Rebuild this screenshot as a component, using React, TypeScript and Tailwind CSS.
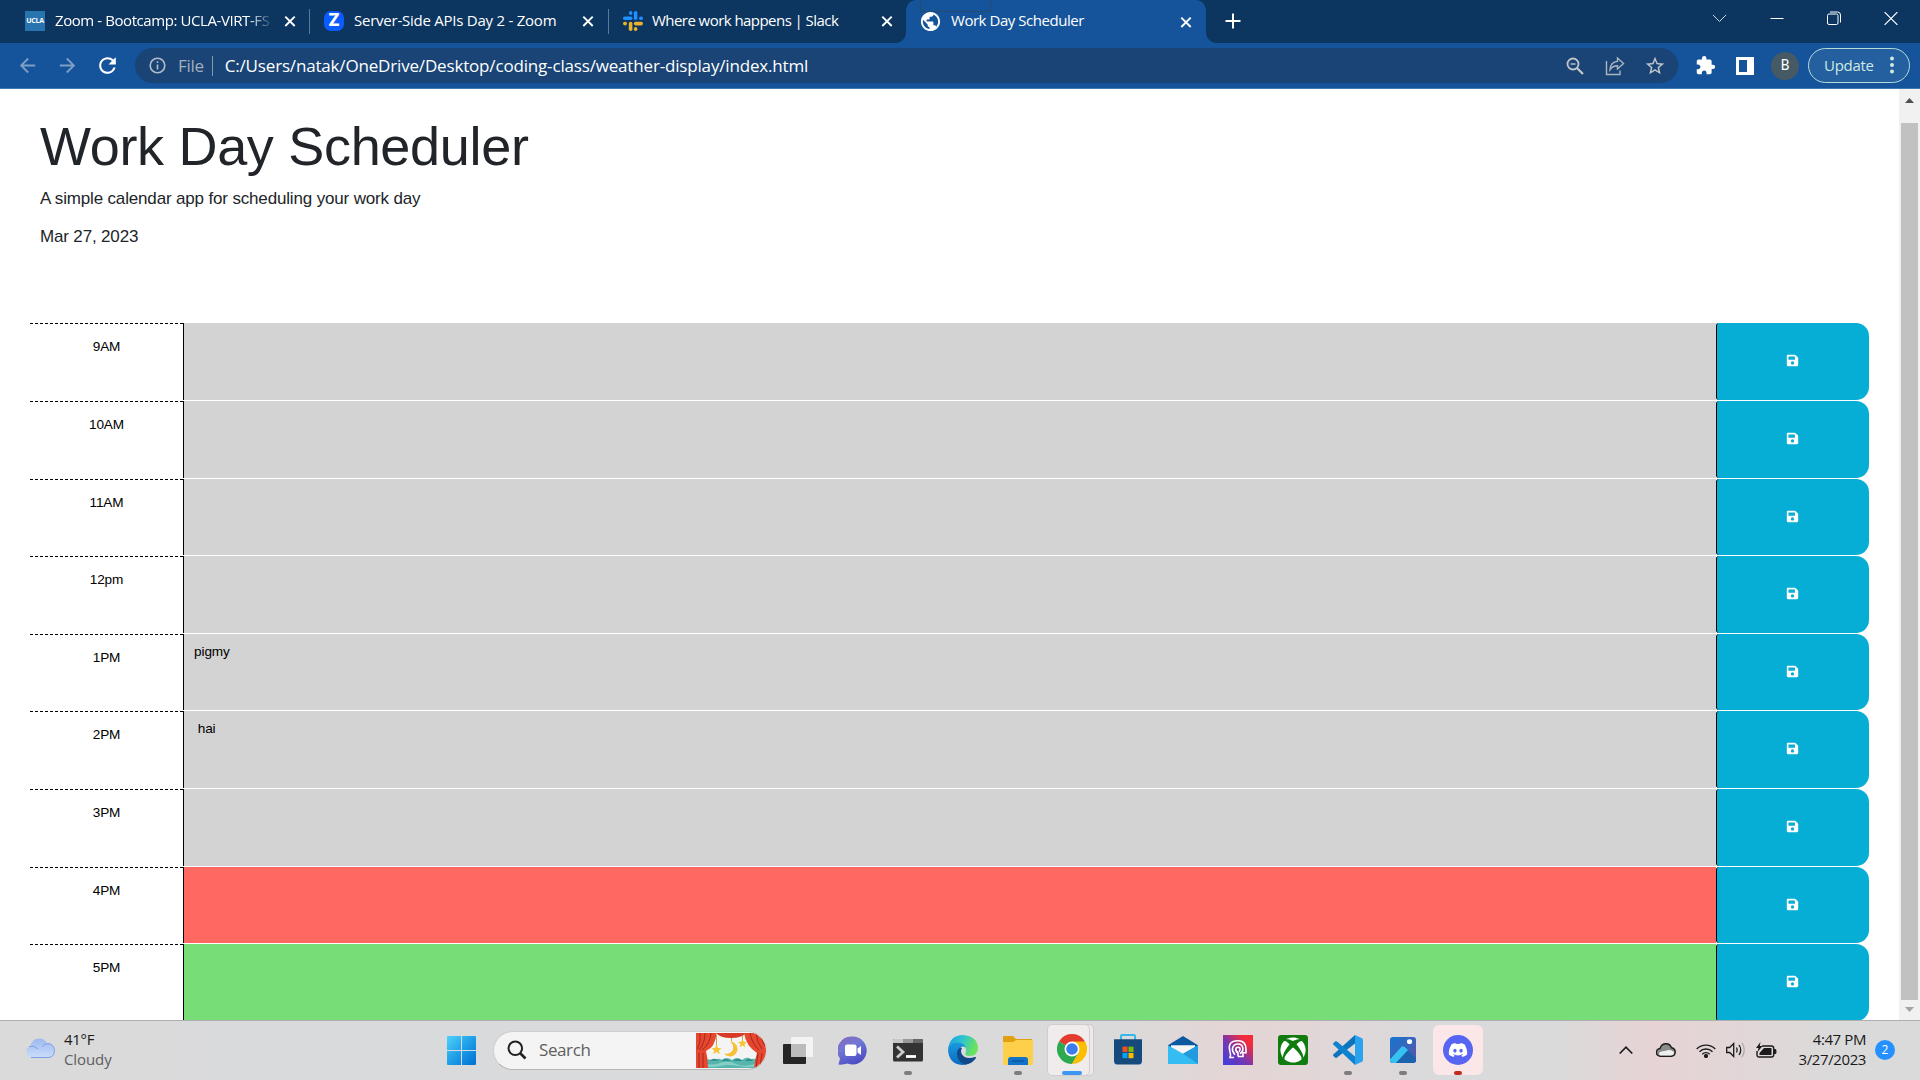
import React from 'react';
import { FaSave } from 'react-icons/fa';
import { MdExtension, MdStarBorder, MdRefresh, MdArrowBack, MdArrowForward, MdPublic } from 'react-icons/md';
import { FaDiscord, FaXbox } from 'react-icons/fa';

const UI = "font-['Open_Sans','Noto_Sans',sans-serif]";

function TabClose() {
  return (
    <svg className="size-[18px] shrink-0" viewBox="0 0 18 18" fill="none" stroke="#fff" strokeWidth="1.9">
      <path d="M4.3 4.6l9.4 9.4M13.7 4.6L4.3 14" />
    </svg>
  );
}

function SlackIcon() {
  return (
    <svg className="size-5 shrink-0" viewBox="0 0 20 20">
      <g fill="#1e90ff">
        <rect x="6" y="0" width="3.4" height="4" rx="1.7" />
        <rect x="0" y="5.5" width="9.4" height="3.6" rx="1.8" />
        <rect x="10.8" y="0" width="3.6" height="9.1" rx="1.8" />
        <rect x="16" y="5.5" width="4" height="3.6" rx="1.8" />
      </g>
      <g fill="#ecb22e">
        <rect x="0" y="10.8" width="4" height="3.6" rx="1.8" />
        <rect x="5.8" y="10.8" width="3.6" height="9.2" rx="1.8" />
        <rect x="10.8" y="10.8" width="9.2" height="3.6" rx="1.8" />
        <rect x="10.8" y="16" width="3.6" height="4" rx="1.8" />
      </g>
    </svg>
  );
}

function TabStrip() {
  return (
    <div className="flex h-[43px] bg-[#0c3560] text-white">
      <div className="flex h-[42px] w-[310px] items-center pl-[25px]">
        <div className="flex size-5 shrink-0 items-center justify-center bg-[#2774ae] text-[7px] font-bold tracking-[-0.3px]">UCLA</div>
        <div className="ml-[10px] w-[220px] whitespace-nowrap pb-[2px] text-[15px] tracking-[-0.42px] [mask-image:linear-gradient(to_right,#000_88%,transparent)]">
          Zoom - Bootcamp: UCLA-VIRT-FS
        </div>
        <div className="ml-[7px]"><TabClose /></div>
        <div className="ml-[10px] h-[25px] w-px bg-[#5b7896]" />
      </div>
      <div className="flex h-[42px] w-[299px] items-center pl-[14px]">
        <div className="flex size-5 shrink-0 items-center justify-center rounded-[7px] bg-[#0b5cff] font-[Inter] text-[17px] font-extrabold">Z</div>
        <div className="ml-[10px] w-[225px] whitespace-nowrap pb-[2px] text-[15px] tracking-[-0.24px]">Server-Side APIs Day 2 - Zoom</div>
        <TabClose />
        <div className="ml-[11px] h-[25px] w-px bg-[#5b7896]" />
      </div>
      <div className="flex h-[42px] w-[291px] items-center pl-[14px]">
        <SlackIcon />
        <div className="ml-[9px] w-[226px] whitespace-nowrap pb-[2px] text-[15px] tracking-[-0.55px]">Where work happens | Slack</div>
        <TabClose />
      </div>
      <div className="relative -ml-[4px] flex h-[43px] w-[320px] items-end">
        <div className="size-[10px] shrink-0 bg-[radial-gradient(circle_at_0_0,transparent_9.5px,#15539a_10px)]" />
        <div className="flex h-[43px] w-[300px] shrink-0 items-center rounded-t-[10px] bg-[#15539a] pl-[13px]">
          <MdPublic className="size-[23px] shrink-0" />
          <div className="ml-[9px] w-[225px] whitespace-nowrap pb-[3px] text-[15px] tracking-[-0.46px]">Work Day Scheduler</div>
          <div className="ml-px"><TabClose /></div>
        </div>
        <div className="size-[10px] shrink-0 bg-[radial-gradient(circle_at_100%_0,transparent_9.5px,#15539a_10px)]" />
        <div className="absolute left-[24px] top-[-2px] h-[14px] w-[71px] border border-[#264a70]" />
      </div>
      <svg className="ml-[8px] mt-[12px] size-[18px]" viewBox="0 0 18 18" stroke="#fff" strokeWidth="2">
        <path d="M9 1.5v15M1.500 9h15" />
      </svg>
      <div className="ml-auto flex items-start gap-[43px] pr-[22px] pt-[11px]">
        <svg className="h-[15px] w-[15px]" viewBox="0 0 15 15" fill="none" stroke="#c9d5e1"><path d="M1 4l6.500 6.500L14 4" /></svg>
        <svg className="h-[15px] w-[14px]" viewBox="0 0 14 15" stroke="#fff"><path d="M0.500 7.500h13" /></svg>
        <svg className="h-[15px] w-[14px]" viewBox="0 0 14 15" fill="none" stroke="#fff"><rect x="0.500" y="3" width="10.500" height="10.500" rx="1.500" /><path d="M3 1h7.500q3 0 3 3v7.500" /></svg>
        <svg className="h-[15px] w-[14px]" viewBox="0 0 14 15" stroke="#fff" strokeWidth="1.200"><path d="M.6 1.100l12.800 12.800M13.400 1.100L.6 13.900" /></svg>
      </div>
    </div>
  );
}

function Toolbar() {
  return (
    <div className="flex h-[46px] items-center border-b border-[#3f78b4] bg-[#15539a] pr-[10px]">
      <MdArrowBack className="ml-[16px] size-[23px] text-[#7d9fc6]" />
      <MdArrowForward className="ml-[17px] size-[23px] text-[#7d9fc6]" />
      <MdRefresh className="ml-[16px] size-[25px] text-white" />
      <div className="ml-[15px] flex h-[35px] w-[1543px] items-center rounded-full bg-[#194475]">
        <svg className="ml-[14px] size-[17px]" viewBox="0 0 17 17" fill="none" stroke="#b3bcc8" strokeWidth="1.600">
          <circle cx="8.500" cy="8.500" r="7.300" /><path d="M8.500 7.500v5M8.500 4.200v1.700" />
        </svg>
        <div className="ml-[12px] text-[17px] leading-none tracking-[-0.3px] text-[#a3afbd]">File</div>
        <div className="ml-[8px] h-[20px] w-px bg-[#8397ae]" />
        <div className="ml-[12px] flex-1 whitespace-nowrap text-[17px] leading-[24px] tracking-[-0.17px] text-white">
          C:/Users/natak/OneDrive/Desktop/coding-class/weather-display/index.html
        </div>
        <svg className="mr-[21px] size-[18px]" viewBox="0 0 18 18" fill="none" stroke="#c3c7cd" strokeWidth="1.800">
          <circle cx="7" cy="7" r="5.500" /><path d="M11 11l6 6" strokeWidth="2.200" /><path d="M4.500 7h5" strokeWidth="1.400" />
        </svg>
        <svg className="mr-[19px] size-[20px]" viewBox="0 0 20 20" fill="none" stroke="#aab5c2" strokeWidth="1.400">
          <path d="M1.500 5v13.500h13.500v-4" /><path d="M12.500 2l6 5.500-6 5.500v-3.200c-3.500 0-5.500 1-7.500 4 .3-4.500 2.500-8 7.500-8.600z" />
        </svg>
        <MdStarBorder className="mr-[12px] size-[22px] text-[#c3c7cd]" />
      </div>
      <MdExtension className="ml-[17px] size-[21px] text-white" />
      <div className="ml-[20px] h-[18px] w-[18px] border-[3px] border-r-[7px] border-white" />
      <div className="ml-[17px] flex size-[28px] items-center justify-center rounded-full bg-[#455a64] font-[Roboto] text-[14px] text-white">B</div>
      <div className="ml-[9px] flex h-[35px] w-[102px] items-center rounded-full border-[1.500px] border-[#b5dcd6] bg-[#245f9f] pb-px pl-[15px] text-[15px] text-[#cfe9e2]">
        <span className="w-[62px] tracking-[-0.3px]">Update</span>
        <svg className="h-[18px] w-[12px]" viewBox="0 0 12 18" fill="#cfe9e2"><circle cx="6" cy="2.500" r="2" /><circle cx="6" cy="9" r="2" /><circle cx="6" cy="15.500" r="2" /></svg>
      </div>
    </div>
  );
}

const rows = [
  { label: '9AM', size: 'h-[78px]', color: 'bg-[#d3d3d3]', text: '' },
  { label: '10AM', size: 'h-[78px]', color: 'bg-[#d3d3d3]', text: '' },
  { label: '11AM', size: 'h-[77px]', color: 'bg-[#d3d3d3]', text: '' },
  { label: '12pm', size: 'h-[78px]', color: 'bg-[#d3d3d3]', text: '' },
  { label: '1PM', size: 'h-[77px]', color: 'bg-[#d3d3d3]', text: 'pigmy' },
  { label: '2PM', size: 'h-[78px]', color: 'bg-[#d3d3d3]', text: ' hai' },
  { label: '3PM', size: 'h-[78px]', color: 'bg-[#d3d3d3]', text: '' },
  { label: '4PM', size: 'h-[77px]', color: 'bg-[#ff6961]', text: '' },
  { label: '5PM', size: 'h-[78px]', color: 'bg-[#77dd77]', text: '' },
];

function Page() {
  return (
    <div className="flex h-[931px] overflow-hidden bg-white font-['Liberation_Sans',Arial,sans-serif]">
      <div className="min-w-0 flex-1">
        <header className="h-[234px] pl-[40px] pt-[25px] text-[#212529]">
          <h1 className="whitespace-nowrap text-[54px] leading-[65px] tracking-[-0.31px]">Work Day Scheduler</h1>
          <p className="mt-[8px] text-[17px] leading-[24px] tracking-[-0.16px]">A simple calendar app for scheduling your work day</p>
          <p className="mt-[14px] text-[17px] leading-[24px] tracking-[-0.16px]">Mar 27, 2023</p>
        </header>
        <main className="ml-[30px] w-[1839px]">
          {rows.map((r) => (
            <div key={r.label} className={'flex pb-px ' + r.size}>
              <div className="w-[153px] shrink-0">
                <svg className="block h-px w-[153px]" viewBox="0 0 153 1"><path d="M0 .5h153" stroke="#000" strokeDasharray="3 2" /></svg>
                <div className="pt-[14px] text-center text-[13.6px] leading-[17px] tracking-[-0.15px] text-black">{r.label}</div>
              </div>
              <div className={'flex-1 whitespace-pre border-l border-black pl-[10px] pt-[9px] text-[13.6px] leading-[17px] tracking-[-0.1px] text-black ' + r.color}>{r.text}</div>
              <div className="w-[153px] shrink-0">
                <div className="flex h-full items-center justify-center rounded-l-[3px] rounded-r-[13px] border-l border-black bg-[#06aed5] pb-[2px] pr-[2px]">
                  <FaSave className="size-[13px] text-white" />
                </div>
              </div>
            </div>
          ))}
        </main>
      </div>
      <div className="flex w-[21px] flex-col items-center bg-[#f1f1f1]">
        <svg className="mt-[9px] h-[5px] w-[9px]" viewBox="0 0 9 5"><path d="M0 5L4.500 0 9 5z" fill="#505050" /></svg>
        <div className="mt-[20px] h-[877px] w-[17px] bg-[#c1c1c1]" />
        <svg className="mt-[7px] h-[5px] w-[9px]" viewBox="0 0 9 5"><path d="M0 0L4.500 5 9 0z" fill="#a3a3a3" /></svg>
      </div>
    </div>
  );
}

function Slot({ children, mark }: { children: React.ReactNode; mark?: string }) {
  return (
    <div className="relative flex h-[58px] w-[55px] shrink-0 items-center justify-center">
      {children}
      {mark && <div className={'absolute bottom-[5px] h-[4px] rounded-full ' + mark} />}
    </div>
  );
}

function SearchArt() {
  return (
    <svg className="h-[35px] w-[70px] shrink-0" viewBox="0 0 70 35">
      <rect width="70" height="35" fill="#f4f4f4" />
      <path d="M8 29q4-5 9-1 5-4 9-1 4-4 10 0 5-4 10 0 5-4 9-1 4-1 7 1v8H8z" fill="#56b5ad" />
      <path d="M8 30q8 3 16 0t16 1 22-1v3q-10 2-20 0t-18 0-16 0z" fill="#85cfc6" />
      <path d="M14 28q3-4 9-.5zM25 28q4-4 10 0zM37 28q4-4 10 0zM49 28q4-4 8 0z" fill="#2c8b8d" />
      <path d="M20.500 2v11M46.500 2v5M35.500 3v5" stroke="#caa04a" />
      <path d="M34 8.500a7.500 7.500 0 1 1-6 12q7 1 9-4 1-5-3-8z" fill="#f5c136" />
      <path d="M20.500 12l1.500 3 3.500.3-2.700 2.200 1 3.500-3.300-2-3.300 2 1-3.500-2.700-2.200 3.500-.3zM46.500 6l1.300 2.800 3.200.3-2.500 2 .8 3.200-2.800-1.700-2.800 1.700.8-3.200-2.500-2 3.200-.3z" fill="#f7c531" />
      <path d="M20 0h30q-4 5-15 5T20 0z" fill="#d93a28" />
      <path d="M0 0h20.500q-1 14-10.500 18 2 8 2 17H0z" fill="#e5472f" />
      <path d="M48 0h22v35H58q1-9 3-15-11-7-13-20z" fill="#e5472f" />
      <path d="M4 0q1 10-3 16M9 0q0 10-6 17M15 0q-1 11-9 17M3 20v15M7 20v15M54 0q2 11 9 17M60 0q1 10 6 16M66 20l-2 15M62 20l-2 15M65 0q0 8 4 13" stroke="#a8261f" fill="none" />
    </svg>
  );
}

function Taskbar() {
  return (
    <div className="flex h-[60px] items-center border-t border-[#b0afb0] bg-[linear-gradient(90deg,#dadada_0%,#d9dadc_18%,#dadada_58%,#e4d5d6_64%,#e2d6d7_68%,#d9dadc_75%,#dadada_81%,#e6d3d5_86%,#e2d6d7_90%,#dadada_96%)]">
      <svg className="mb-[6px] ml-[25px] h-[20px] w-[30px]" viewBox="0 0 30 20">
        <defs><linearGradient id="cl" x2="0" y2="1"><stop stopColor="#9db9ee" /><stop offset="1" stopColor="#c9dcfa" /></linearGradient></defs>
        <path d="M6 19.500a6 6 0 0 1-.5-11.500Q7 .5 14 .5q6 0 8 5 7.500 0 7.500 7t-6.500 7z" fill="url(#cl)" />
        <path d="M4 8.500q5-1.500 9 2.500M17 9q2-3.500 6-3.500 6 .5 6.500 7-.5 7-6.500 7H6" fill="none" stroke="#7c9fe6" />
      </svg>
      <div className="ml-[9px] w-[372px] pb-[4px] text-[15px] leading-[20px] tracking-[-0.3px]">
        <div className="text-[#1b1b1b]">41°F</div>
        <div className="tracking-[-0.1px] text-[#5f5f5f]">Cloudy</div>
      </div>
      <svg className="ml-[11px] size-[29px]" viewBox="0 0 29 29">
        <defs><linearGradient id="wn" x2="1" y2="1"><stop stopColor="#4fd3fb" /><stop offset=".5" stopColor="#1f9ee8" /><stop offset="1" stopColor="#0070d2" /></linearGradient></defs>
        <path d="M0 1q0-1 1-1h13v14H0zM15 0h13q1 0 1 1v13H15zM0 15h14v14H1q-1 0-1-1zM15 15h14v13q0 1-1 1H15z" fill="url(#wn)" />
      </svg>
      <div className="mb-px ml-[17px] flex h-[39px] w-[274px] items-center overflow-hidden rounded-full border border-b-[#b5b5b5] border-[#cfcfcf] bg-[#f4f4f4]">
        <svg className="ml-[13px] size-[20px]" viewBox="0 0 20 20" fill="none" stroke="#222" strokeWidth="2"><circle cx="8.300" cy="8.300" r="6.800" /><path d="M13 13l5.500 5.500" strokeWidth="2.600" /></svg>
        <div className="ml-[12px] flex-1 text-[17px] tracking-[-0.4px] text-[#5f5f5f]">Search</div>
        <SearchArt />
      </div>
      <div className="ml-[3px] flex">
        <Slot>
          <svg className="size-[30px]" viewBox="0 0 30 30"><rect x="0" y="8" width="23" height="20" rx="1" fill="#252525" /><rect x="8" y="1" width="22" height="20" rx="1" fill="#f3f3f3" /><path d="M8 8h15v13H8z" fill="#bcbcbc" /></svg>
        </Slot>
        <Slot>
          <svg className="size-[29px]" viewBox="0 0 29 29">
            <defs><linearGradient id="tm" x1=".1" y1="0" x2=".6" y2="1"><stop stopColor="#8c65b4" /><stop offset=".4" stopColor="#7178d6" /><stop offset="1" stopColor="#4b4bc4" /></linearGradient></defs>
            <path d="M14.500.5a14 14 0 1 1-5 27q-5 1.500-9 1l1.500-6A14 14 0 0 1 14.500.5z" fill="url(#tm)" /><rect x="7" y="8.500" width="11.500" height="11.500" rx="2" fill="#fff" /><path d="M19.500 12.500l3.500-2.500v9l-3.500-2.500z" fill="#fff" />
          </svg>
        </Slot>
        <Slot mark="w-[8px] bg-[#7d7d7d]">
          <svg className="h-[23px] w-[30px]" viewBox="0 0 30 23"><rect width="30" height="22.500" rx="1.500" fill="#333" /><path d="M1 0h9v4H0V1z" fill="#c9c9c9" /><path d="M10 0h10v4H10z" fill="#999" /><path d="M20 0h9l1 1v3H20z" fill="#666" /><path d="M4 7.500l6 5.500-6 5.500" stroke="#ccc" strokeWidth="2.800" fill="none" /><path d="M13 17.500h10" stroke="#fff" strokeWidth="2.800" /></svg>
        </Slot>
        <Slot>
          <svg className="mb-px h-[30px] w-[30px]" viewBox="0 0 30 30">
            <defs>
              <linearGradient id="ed" x2="1" y2=".3"><stop stopColor="#1a9be0" /><stop offset=".5" stopColor="#2fc3d0" /><stop offset="1" stopColor="#6be35c" /></linearGradient>
              <linearGradient id="ee" x2="0" y2="1"><stop stopColor="#1a9ae0" /><stop offset="1" stopColor="#0c6ac0" /></linearGradient>
            </defs>
            <path d="M0 14Q2 0 15 0q14 1 15 12.500 0 8.500-8.500 8.500-5 0-4-2.500Q19.500 14 16 11 9 6 0 14z" fill="url(#ed)" />
            <path d="M0 15Q1 7.500 9 7.500q6.500 0 9 5-5-2.500-6.500 2-1.500 7 3.500 10.500 3.500 2.500 8 1.500-3 3.500-9 3.500Q1 29 0 15z" fill="url(#ee)" />
            <path d="M12 12.500q-4.500 4-2.500 9.500 2 6 8 7.500 7-1 10.500-6.500.5-1.500-1-1-9 3-13-2.500-2-3.500 0-6.500z" fill="#114a8b" />
          </svg>
        </Slot>
        <Slot mark="w-[8px] bg-[#7d7d7d]">
          <svg className="h-[29px] w-[30px]" viewBox="0 0 30 29"><path d="M0 1q0-1 1-1h9l3 3h16v8H0z" fill="#e0a010" /><path d="M0 6h10l3-2h17v24q0 1-1 1H1q-1 0-1-1z" fill="#fdcf4a" /><path d="M5 29v-5q0-3 3-3h14q3 0 3 3v5z" fill="#1172c8" /><path d="M9 25h12" stroke="#0b4b8c" /></svg>
        </Slot>
        <div className="relative mb-px flex h-[52px] w-[55px] items-center justify-center self-center">
          <div className="absolute left-[6px] top-0 h-full w-[43px] rounded-[5px] border border-[#cfcaca] bg-[#eeeaea]" />
          <div className="absolute left-[2px] top-0 h-full w-[43px] rounded-[5px] border border-[#d2cccc] bg-[#f0ecec]" />
          <svg className="absolute left-[12px] top-[10px] size-[30px]" viewBox="0 0 32 32">
            <path d="M16 16L2.140 8A16 16 0 0 1 29.860 8z" fill="#e33b2e" /><path d="M16 16L2.140 8A16 16 0 0 0 16 32l7-12z" fill="#2da94f" /><path d="M16 8h13.860A16 16 0 0 1 16 32l6.930-12z" fill="#fdbd00" /><circle cx="16" cy="16" r="8" fill="#fff" /><circle cx="16" cy="16" r="6.200" fill="#3b7ded" />
          </svg>
          <div className="absolute bottom-px left-[17px] h-[4px] w-[20px] rounded-full bg-[#3f97f5]" />
        </div>
        <Slot>
          <svg className="mb-[2px] h-[31px] w-[30px]" viewBox="0 0 30 32" preserveAspectRatio="none"><path d="M8 6V2q0-1 1-1h12q1 0 1 1v4" fill="none" stroke="#35b7ea" strokeWidth="2" /><path d="M1 5.500h28v22q0 4-4 4H5q-4 0-4-4z" fill="#164a7c" /><path d="M9.500 13h5v5.500h-5z" fill="#f25022" /><path d="M15.500 13h5v5.500h-5z" fill="#7fba00" /><path d="M9.500 19.500h5V25h-5z" fill="#00a4ef" /><path d="M15.500 19.500h5V25h-5z" fill="#ffb900" /></svg>
        </Slot>
        <Slot>
          <svg className="mb-px h-[28px] w-[30px]" viewBox="0 0 30 30" preserveAspectRatio="none"><path d="M0 10L15 0l15 10v6H0z" fill="#0b5a9f" /><path d="M3 10h24v8l-12 6-12-6z" fill="#f5f5f5" /><path d="M0 10l15 9 15-9v20H0z" fill="#35bdf2" /><path d="M15 19l15 11V10z" fill="#209be0" /></svg>
        </Slot>
        <Slot>
          <svg className="mb-px size-[30px]" viewBox="0 0 30 32" preserveAspectRatio="none">
            <defs><linearGradient id="pg" x1="0" y1="1" x2="1" y2="0"><stop stopColor="#3b3fe0" /><stop offset=".45" stopColor="#7a36b0" /><stop offset=".8" stopColor="#f42b3a" /></linearGradient></defs>
            <rect width="30" height="32" fill="url(#pg)" /><g fill="none" stroke="#fff" strokeWidth="1.600"><path d="M11 24H7q1-3 0-6Q4 6 15 6q8 0 8 9v4h-3v4h-5" /><path d="M12 21q-3-3-2.500-7 1-4.500 5.500-4.500t5 5q0 4-3 5.500" /><path d="M15 23v-4q-3-2-2-5 2-2 4 0 .5 2.500-1 4" /></g>
          </svg>
        </Slot>
        <Slot>
          <div className="mb-px flex size-[30px] items-center justify-center rounded-[3px] bg-[#107c10]"><FaXbox className="size-[26px] text-white" /></div>
        </Slot>
        <Slot mark="w-[8px] bg-[#7d7d7d]">
          <svg className="mb-px size-[30px]" viewBox="0 0 30 32" preserveAspectRatio="none"><path d="M22 0v9L4 24q-1 1-2 0l-1.500-1.500q-1-1 0-2z" fill="#0b74bd" /><path d="M22 32v-9L4 7Q3 6.300 2 7L.5 8.500q-1 1 0 2z" fill="#0f82cf" /><path d="M22 0l7 3.500q1 .5 1 2v21q0 1.500-1 2L22 32z" fill="#29a3ee" /></svg>
        </Slot>
        <Slot mark="w-[8px] bg-[#7d7d7d]">
          <svg className="mb-px h-[26px] w-[26px]" viewBox="0 0 26 28" preserveAspectRatio="none"><defs><linearGradient id="ph" x2="1" y2="1"><stop stopColor="#1376cf" /><stop offset="1" stopColor="#6152a8" /></linearGradient><clipPath id="pc"><rect width="26" height="28" rx="3" /></clipPath></defs><g clipPath="url(#pc)"><rect width="26" height="28" fill="url(#ph)" /><path d="M-1 24L11 11q2-2 4 0l12 13v5H-1z" fill="#1b63ae" /><path d="M-1 25L11 11q2-2 4 0l3 3L5 29h-6z" fill="#36c1f0" /></g><circle cx="19.500" cy="5" r="2.600" fill="#fff" /></svg>
        </Slot>
        <div className="relative mb-[2px] ml-[3px] flex h-[50px] w-[50px] items-center justify-center self-center rounded-[6px] bg-[#fbe6e8]">
          <div className="flex size-[30px] items-center justify-center rounded-full bg-[#5865f2]"><FaDiscord className="size-[20px] text-white" /></div>
          <div className="absolute bottom-0 h-[4px] w-[8px] rounded-full bg-[#c42b1c]" />
        </div>
      </div>
      <div className="ml-auto flex items-center pb-px pr-[25px]">
        <svg className="h-[8px] w-[14px]" viewBox="0 0 14 8" fill="none" stroke="#1b1b1b" strokeWidth="1.600"><path d="M.7 7.500L7 1.200l6.300 6.300" /></svg>
        <svg className="ml-[23px] h-[14px] w-[20px]" viewBox="0 0 20 14"><path d="M4.500 13.200A3.800 3.800 0 0 1 4 5.500Q5.500.8 10 .8q4 0 5.500 4 3.700.7 3.700 4.200 0 4-4 4.200z" fill="#8b8b8b" stroke="#1b1b1b" strokeWidth="1.400" /><path d="M4 12.500q-2-2 0-3.500 3-1 5-1 5-2.500 9 1 .5 3-3 3.500z" fill="#eee" /></svg>
        <svg className="ml-[20px] h-[15px] w-[20px]" viewBox="0 0 20 15" fill="none" stroke="#1b1b1b" strokeWidth="1.400"><path d="M.7 6a13.200 13.200 0 0 1 18.600 0M3.500 8.700a9.200 9.200 0 0 1 13 0M6.300 11.200a5.200 5.200 0 0 1 7.400 0" /><circle cx="10" cy="13" r="1.400" fill="#1b1b1b" /></svg>
        <svg className="ml-[10px] h-[16px] w-[20px]" viewBox="0 0 20 16" fill="none" stroke="#1b1b1b" strokeWidth="1.300"><path d="M.7 5.500v5h3l4 4V1.500l-4 4z" /><path d="M10.500 5.500q1.500 2.500 0 5M13 3q3.500 5 0 10" /><path d="M16 1q4.500 7 0 14" stroke="#aaa" /></svg>
        <svg className="ml-[10px] h-[16px] w-[21px]" viewBox="0 0 21 16"><path d="M6 4h9.500q2.200 0 2.200 2.200v6.600q0 2.200-2.200 2.200H3.200Q1 15 1 12.800V9" fill="none" stroke="#1b1b1b" strokeWidth="1.400" /><path d="M18 7h1.500q1 0 1 2.500t-1 2.500H18zM8 6h7.500v7H3.500V11z" fill="#1b1b1b" /><path d="M4.500 0L0 6h2.500L1.500 10 6.500 4H3.800z" fill="#1b1b1b" /></svg>
        <div className="ml-[17px] w-[72px] whitespace-nowrap pb-[3px] text-right text-[15px] leading-[20px] tracking-[-0.4px] text-[#1b1b1b]">
          <div>4:47 PM</div>
          <div>3/27/2023</div>
        </div>
        <div className="ml-[9px] flex size-[20px] items-center justify-center rounded-full bg-[#2590ff] text-[12px] text-white">2</div>
      </div>
    </div>
  );
}

export default function App() {
  return (
    <div className={'flex h-[1080px] w-[1920px] flex-col overflow-hidden ' + UI}>
      <TabStrip />
      <Toolbar />
      <Page />
      <Taskbar />
    </div>
  );
}
